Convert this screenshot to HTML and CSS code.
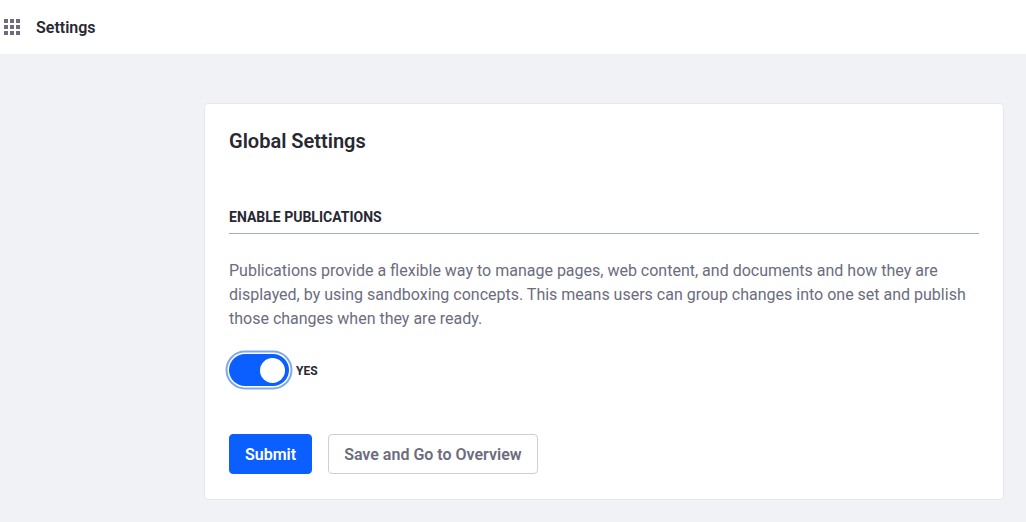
FILE: index.html
```html
<!DOCTYPE html>
<html lang="en">
<head>
<meta charset="utf-8">
<title>Settings</title>
<link rel="stylesheet" href="styles.css">
</head>
<body>
<header class="topbar">
  <svg class="grid-icon" width="16" height="16" viewBox="0 0 16 16" aria-hidden="true">
    <rect x="0" y="0" width="4" height="4"/><rect x="6" y="0" width="4" height="4"/><rect x="12" y="0" width="4" height="4"/>
    <rect x="0" y="6" width="4" height="4"/><rect x="6" y="6" width="4" height="4"/><rect x="12" y="6" width="4" height="4"/>
    <rect x="0" y="12" width="4" height="4"/><rect x="6" y="12" width="4" height="4"/><rect x="12" y="12" width="4" height="4"/>
  </svg>
  <span class="topbar-title">Settings</span>
</header>
<main class="content">
  <section class="card">
    <h1 class="card-title">Global Settings</h1>
    <h2 class="section-title">ENABLE PUBLICATIONS</h2>
    <p class="description">Publications provide a flexible way to manage pages, web content, and documents and how they are displayed, by using sandboxing concepts. This means users can group changes into one set and publish those changes when they are ready.</p>
    <div class="toggle-row">
      <span class="toggle"><span class="knob"></span></span>
      <span class="toggle-label">YES</span>
    </div>
    <div class="actions">
      <button class="btn btn-primary" type="button">Submit</button>
      <button class="btn btn-secondary" type="button">Save and Go to Overview</button>
    </div>
  </section>
</main>
</body>
</html>
```
FILE: styles.css
```css
* { box-sizing: border-box; }
html, body { margin: 0; padding: 0; }
body {
  width: 1026px;
  height: 522px;
  overflow: hidden;
  background: #f0f2f5;
  font-family: Roboto, "Liberation Sans", sans-serif;
  color: #272833;
}
.topbar {
  height: 54px;
  background: #fff;
  display: flex;
  align-items: center;
  padding-left: 4px;
  gap: 16px;
}
.grid-icon { fill: #6b6c7e; flex: none; }
.topbar-title { font-size: 16px; font-weight: 600; }
.content { padding: 49px 22px 0 204px; }
.card {
  height: 397px;
  background: #fff;
  border: 1px solid #e7e7ed;
  border-radius: 4px;
  padding: 24px 24px 0 24px;
}
.card-title { margin: 0; font-size: 20px; font-weight: 600; line-height: 26px; }
.section-title {
  margin: 55px 0 0;
  padding-bottom: 7px;
  border-bottom: 1px solid #a7a9bc;
  font-size: 14px;
  font-weight: 700;
  line-height: 17px;
}
.description {
  margin: 25px 0 0;
  font-size: 16px;
  line-height: 24px;
  color: #6b6c7e;
}
.toggle-row { display: flex; align-items: center; gap: 7px; margin-top: 22px; }
.toggle {
  width: 60px;
  height: 32px;
  border-radius: 16px;
  background: #0b5fff;
  box-shadow: 0 0 0 1.5px #fff, 0 0 0 3.5px #7fa9e8;
  display: flex;
  align-items: center;
  justify-content: flex-end;
  padding-right: 4px;
  margin-block: 1px 3px;
}
.knob { width: 25px; height: 25px; border-radius: 50%; background: #fff; }
.toggle-label { font-size: 12px; font-weight: 700; }
.actions { display: flex; gap: 16px; margin-top: 45px; }
.btn {
  height: 40px;
  border-radius: 4px;
  font-family: inherit;
  font-size: 16px;
  font-weight: 600;
  padding: 0 15px;
  border: 1px solid transparent;
}
.btn-primary { background: #0b5fff; color: #fff; border-color: #0b5fff; }
.btn-secondary { background: #fff; color: #6b6c7e; border-color: #cdced9; }
```
